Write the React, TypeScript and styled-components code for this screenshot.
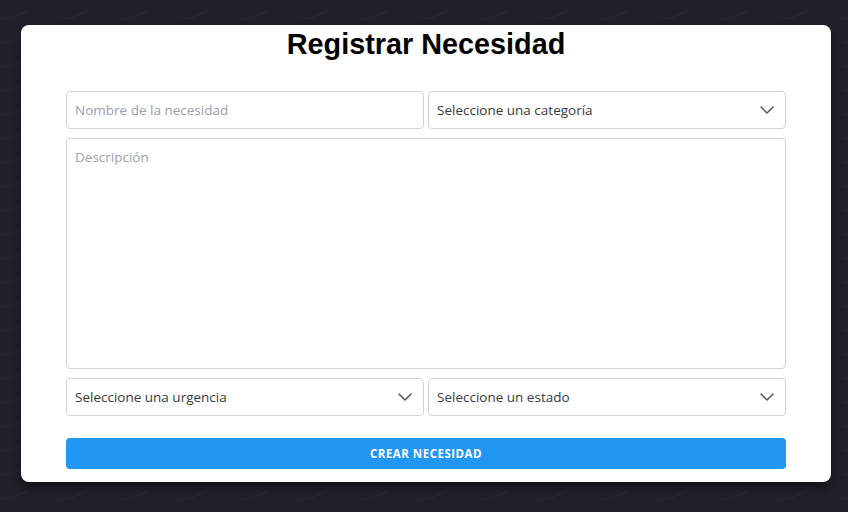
import React from "react";
import styled, { createGlobalStyle } from "styled-components";

const pattern = encodeURIComponent(
  `<svg xmlns="http://www.w3.org/2000/svg" width="60" height="24"><path d="M2 20 q4 -3 7 -2 q3 1 6 -2 q3 -2 6 -2 q3 -1 6 -3" fill="none" stroke="#2a2a36" stroke-width="1"/></svg>`
);

const GlobalStyle = createGlobalStyle`
  html, body { margin: 0; padding: 0; }
  body {
    background-color: #21212b;
    background-image: url("data:image/svg+xml,${pattern}");
    font-family: "Open Sans", "Noto Sans", sans-serif;
    width: 848px;
    height: 512px;
    overflow: hidden;
  }
`;

const Page = styled.div`
  padding: 25px 17px 0 21px;
  box-sizing: border-box;
  height: 512px;
`;

const Card = styled.div`
  background: #ffffff;
  border-radius: 8px;
  box-shadow: 0 6px 10px rgba(0, 0, 0, 0.45);
  padding: 3px 45px 13px;
  box-sizing: border-box;
  height: 457px;
  display: flex;
  flex-direction: column;
`;

const Title = styled.h2`
  margin: 0;
  font-family: "Liberation Sans", Arial, sans-serif;
  font-weight: 700;
  font-size: 28.8px;
  line-height: 32px;
  color: #000;
  text-align: center;
`;

const Form = styled.form`
  margin-top: 31px;
  display: flex;
  flex-direction: column;
  gap: 9px;
`;

const Row = styled.div`
  display: grid;
  grid-template-columns: 1fr 1fr;
  gap: 4px;
`;

const fieldBase = `
  box-sizing: border-box;
  border: 1px solid #ced4da;
  border-radius: 4px;
  background: #fff;
  font-family: "Open Sans", "Noto Sans", sans-serif;
  font-size: 13.5px;
  color: #3a3a3a;
  outline: none;
`;

const TextInput = styled.input`
  ${fieldBase}
  height: 38px;
  padding: 0 8px;
  width: 100%;
  &::placeholder { color: #9aa0a8; }
`;

const TextArea = styled.textarea`
  ${fieldBase}
  height: 231px;
  padding: 9px 8px;
  width: 100%;
  resize: none;
  &::placeholder { color: #9aa0a8; }
`;

const SelectBox = styled.div`
  ${fieldBase}
  height: 38px;
  padding: 0 11px 0 8px;
  display: flex;
  align-items: center;
  justify-content: space-between;
`;

const Chevron = () => (
  <svg width="14" height="8" viewBox="0 0 14 8" fill="none">
    <path d="M1 1l6 6 6-6" stroke="#555" strokeWidth="1.5" strokeLinecap="round" strokeLinejoin="round" />
  </svg>
);

const Select: React.FC<{ label: string }> = ({ label }) => (
  <SelectBox>
    <span>{label}</span>
    <Chevron />
  </SelectBox>
);

const Button = styled.button`
  margin-top: 13px;
  height: 31px;
  border: none;
  border-radius: 4px;
  background: #2196f3;
  color: #fff;
  font-family: "Open Sans", "Noto Sans", sans-serif;
  font-weight: 700;
  font-size: 11.5px;
  letter-spacing: 0.5px;
  text-transform: uppercase;
`;

export default function App() {
  return (
    <>
      <GlobalStyle />
      <Page>
        <Card>
          <Title>Registrar Necesidad</Title>
          <Form onSubmit={(e) => e.preventDefault()}>
            <Row>
              <TextInput placeholder="Nombre de la necesidad" />
              <Select label="Seleccione una categoría" />
            </Row>
            <TextArea placeholder="Descripción" />
            <Row>
              <Select label="Seleccione una urgencia" />
              <Select label="Seleccione un estado" />
            </Row>
            <Button type="submit">Crear Necesidad</Button>
          </Form>
        </Card>
      </Page>
    </>
  );
}
